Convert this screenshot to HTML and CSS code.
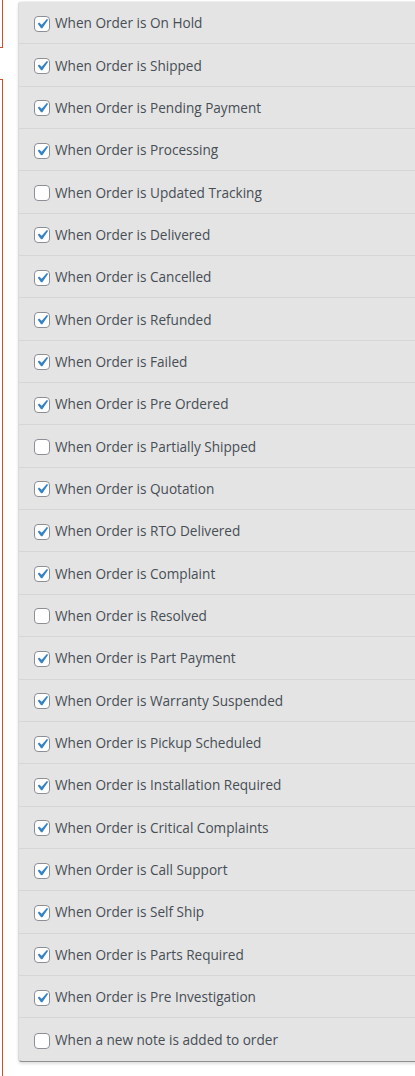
FILE: index.html
```html
<!DOCTYPE html>
<html>
<head>
<meta charset="utf-8">
<link rel="stylesheet" href="styles.css">
</head>
<body>
<div class="page">
  <div class="side">
    <div class="field field-top"></div>
    <div class="field field-bottom"></div>
  </div>
  <div class="panel">
    <label class="row"><span class="cb on"></span>When Order is On Hold</label>
    <label class="row"><span class="cb on"></span>When Order is Shipped</label>
    <label class="row"><span class="cb on"></span>When Order is Pending Payment</label>
    <label class="row"><span class="cb on"></span>When Order is Processing</label>
    <label class="row"><span class="cb"></span>When Order is Updated Tracking</label>
    <label class="row"><span class="cb on"></span>When Order is Delivered</label>
    <label class="row"><span class="cb on"></span>When Order is Cancelled</label>
    <label class="row"><span class="cb on"></span>When Order is Refunded</label>
    <label class="row"><span class="cb on"></span>When Order is Failed</label>
    <label class="row"><span class="cb on"></span>When Order is Pre Ordered</label>
    <label class="row"><span class="cb"></span>When Order is Partially Shipped</label>
    <label class="row"><span class="cb on"></span>When Order is Quotation</label>
    <label class="row"><span class="cb on"></span>When Order is RTO Delivered</label>
    <label class="row"><span class="cb on"></span>When Order is Complaint</label>
    <label class="row"><span class="cb"></span>When Order is Resolved</label>
    <label class="row"><span class="cb on"></span>When Order is Part Payment</label>
    <label class="row"><span class="cb on"></span>When Order is Warranty Suspended</label>
    <label class="row"><span class="cb on"></span>When Order is Pickup Scheduled</label>
    <label class="row"><span class="cb on"></span>When Order is Installation Required</label>
    <label class="row"><span class="cb on"></span>When Order is Critical Complaints</label>
    <label class="row"><span class="cb on"></span>When Order is Call Support</label>
    <label class="row"><span class="cb on"></span>When Order is Self Ship</label>
    <label class="row"><span class="cb on"></span>When Order is Parts Required</label>
    <label class="row"><span class="cb on"></span>When Order is Pre Investigation</label>
    <label class="row last"><span class="cb"></span>When a new note is added to order</label>
  </div>
</div>
</body>
</html>
```
FILE: styles.css
```css
html, body {
  margin: 0;
  padding: 0;
  background: #fff;
  overflow: hidden;
}
.page {
  display: flex;
  width: 415px;
  height: 1076px;
  overflow: hidden;
}
.side {
  width: 18px;
  flex: none;
  display: flex;
  flex-direction: column;
}
.field {
  width: 2px;
  border-right: 1px solid #cf4e2b;
}
.field-top {
  height: 47px;
  border-bottom: 1px solid #cf4e2b;
}
.field-bottom {
  margin-top: 31px;
  flex: 1;
  border-top: 1px solid #cf4e2b;
}
.panel {
  flex: none;
  width: 420px;
  margin-top: 1px;
  align-self: flex-start;
  background: #e4e4e4;
  border-top: 1px solid #efefef;
  border-left: 1px solid #dadada;
  border-bottom: 1px solid #8e8e8e;
  border-radius: 4px 0 0 4px;
  box-shadow: 0 2px 3px rgba(0, 0, 0, 0.12);
  font-family: "Open Sans", "Noto Sans", sans-serif;
  font-size: 13.6px;
  color: #474e55;
}
.row {
  box-sizing: border-box;
  height: 42.35px;
  display: flex;
  align-items: center;
  padding-left: 15px;
  gap: 5px;
  border-bottom: 1px solid #d6d6d6;
}
.row.last {
  border-bottom: none;
  height: 43px;
}
.cb {
  box-sizing: border-box;
  width: 16px;
  height: 16px;
  flex: none;
  border: 1px solid #8c8f94;
  border-radius: 4px;
  background: #fff;
  position: relative;
  top: 1px;
}
.cb.on {
  background: #fff url("data:image/svg+xml;utf8,<svg xmlns='http://www.w3.org/2000/svg' viewBox='0 0 20 20'><path d='M14.83 4.89l1.34.94-5.81 8.38H9.02L5.78 9.67l1.34-1.25 2.57 2.4z' fill='%233582c4'/></svg>") no-repeat -3px -3px / 20px 20px;
}
```
